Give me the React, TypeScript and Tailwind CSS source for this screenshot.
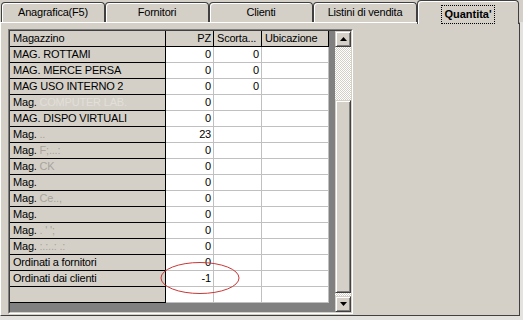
import * as React from 'react';

// Classic VB6-style tabbed form with a FlexGrid ("Quantita'" tab)

type Row = { name: React.ReactNode; pz?: string; scorta?: string };

const faint = (s: string) => <span className="text-[#a8a49c]">{s}</span>;
const ghost = (s: string) => <span className="text-[#e2dfd9]">{s}</span>;

const rows: Row[] = [
  { name: 'MAG. ROTTAMI', pz: '0', scorta: '0' },
  { name: 'MAG. MERCE PERSA', pz: '0', scorta: '0' },
  { name: 'MAG USO INTERNO 2', pz: '0', scorta: '0' },
  { name: <>Mag. {ghost('COMPUTER LAB.')}</>, pz: '0' },
  { name: 'MAG. DISPO VIRTUALI', pz: '0' },
  { name: <>Mag. {faint('..')}</>, pz: '23' },
  { name: <>Mag. {faint('F;...:')}</>, pz: '0' },
  { name: <>Mag. {faint('CK')}</>, pz: '0' },
  { name: 'Mag.', pz: '0' },
  { name: <>Mag. {faint('Ce..,')}</>, pz: '0' },
  { name: 'Mag.', pz: '0' },
  { name: <>Mag. {faint(". ' ';")}</>, pz: '0' },
  { name: <>Mag. {faint(':.:..: .:')}</>, pz: '0' },
  { name: 'Ordinati a fornitori', pz: '0' },
  { name: 'Ordinati dai clienti', pz: '-1' },
  { name: '' },
];

const tabs = ['Anagrafica(F5)', 'Fornitori', 'Clienti', 'Listini di vendita'];

const Tab = ({ label }: { label: string }) => (
  <div className="flex h-[20px] w-[104px] items-center justify-center rounded-t-[4px] border border-b-0 border-[#404040] bg-[#d4d0c8] shadow-[inset_1px_1px_0_#ffffff]">
    {label}
  </div>
);

const Arrow = ({ down }: { down?: boolean }) => (
  <svg width="7" height="4" viewBox="0 0 7 4">
    <path d={down ? 'M0 0h7L3.5 4z' : 'M0 4h7L3.5 0z'} fill="#000" />
  </svg>
);

const ScrollButton = ({ down }: { down?: boolean }) => (
  <div className="flex h-[16px] items-center justify-center border border-t-[#d4d0c8] border-l-[#d4d0c8] border-b-[#404040] border-r-[#404040] bg-[#d4d0c8] shadow-[inset_1px_1px_0_#ffffff,inset_-1px_-1px_0_#808080]">
    <Arrow down={down} />
  </div>
);

const checker =
  'bg-[repeating-conic-gradient(#ffffff_0_25%,#d4d0c8_0_50%)] bg-[length:2px_2px]';

export default function App() {
  return (
    <div className="relative h-[320px] w-[523px] overflow-hidden bg-[#e4e2de] font-['Liberation_Sans',Arial,sans-serif] text-[11px] tracking-[-0.2px] text-black">
      {/* tab strip */}
      <div className="flex h-[22px] items-end bg-[#d4d0c8] pl-[1px]">
        {tabs.map((t) => (
          <Tab key={t} label={t} />
        ))}
        <div className="relative z-10 -mb-[2px] flex h-[24px] w-[102px] items-start justify-center rounded-t-[4px] border border-b-0 border-[#404040] bg-[#d4d0c8] pt-[4px] shadow-[inset_1px_1px_0_#ffffff]">
          <span className="border border-dotted border-black px-[2px] font-bold tracking-normal">
            Quantita'
          </span>
        </div>
      </div>

      {/* panel */}
      <div className="h-[294px] w-[520px] border-t border-l border-t-white border-l-white border-r border-b border-r-[#404040] border-b-[#404040] bg-[#d4d0c8] pt-[6px] pl-[7px]">
        {/* grid with sunken border */}
        <div className="w-[345px] border border-t-[#808080] border-l-[#808080] border-b-white border-r-white">
          <div className="flex h-[283px] border border-t-[#404040] border-l-[#404040] border-b-[#d4d0c8] border-r-[#d4d0c8]">
            <div className="w-[325px] bg-[#808080]">
              {/* header */}
              <div className="flex h-[16px] leading-[15px]">
                <div className="w-[156px] border-r border-b border-black bg-[#d4d0c8] pl-[3px]">Magazzino</div>
                <div className="w-[48px] border-r border-b border-black bg-[#d4d0c8] pr-[2px] text-right">PZ</div>
                <div className="w-[48px] overflow-hidden whitespace-nowrap border-r border-b border-black bg-[#d4d0c8] pl-[3px]">Scorta...</div>
                <div className="w-[67px] border-r border-b border-black bg-[#d4d0c8] pl-[3px]">Ubicazione</div>
              </div>
              {rows.map((r, i) => (
                <div key={i} className="flex h-[16px] leading-[15px]">
                  <div className="w-[156px] overflow-hidden whitespace-nowrap border-r border-b border-black bg-[#d4d0c8] pl-[3px]">
                    {r.name}
                  </div>
                  <div className="w-[48px] border-r border-b border-[#c0c0c0] bg-white pr-[2px] text-right">{r.pz}</div>
                  <div className="w-[48px] border-r border-b border-[#c0c0c0] bg-white pr-[2px] text-right">{r.scorta}</div>
                  <div className="w-[67px] border-r border-b border-[#c0c0c0] bg-white" />
                </div>
              ))}
            </div>
            {/* vertical scrollbar */}
            <div className="flex w-[16px] flex-col">
              <ScrollButton />
              <div className={`h-[53px] ${checker}`} />
              <div className="h-[193px] border border-t-[#d4d0c8] border-l-[#d4d0c8] border-b-[#404040] border-r-[#404040] bg-[#d4d0c8] shadow-[inset_1px_1px_0_#ffffff,inset_-1px_-1px_0_#808080]" />
              <div className={`flex-1 ${checker}`} />
              <ScrollButton down />
            </div>
          </div>
        </div>
      </div>

      {/* red annotation ellipse */}
      <svg className="absolute left-[160px] top-[261px]" width="80" height="34" viewBox="0 0 80 34">
        <ellipse cx="40" cy="17" rx="39" ry="15.5" fill="none" stroke="#c83838" strokeWidth="1" />
      </svg>
    </div>
  );
}
